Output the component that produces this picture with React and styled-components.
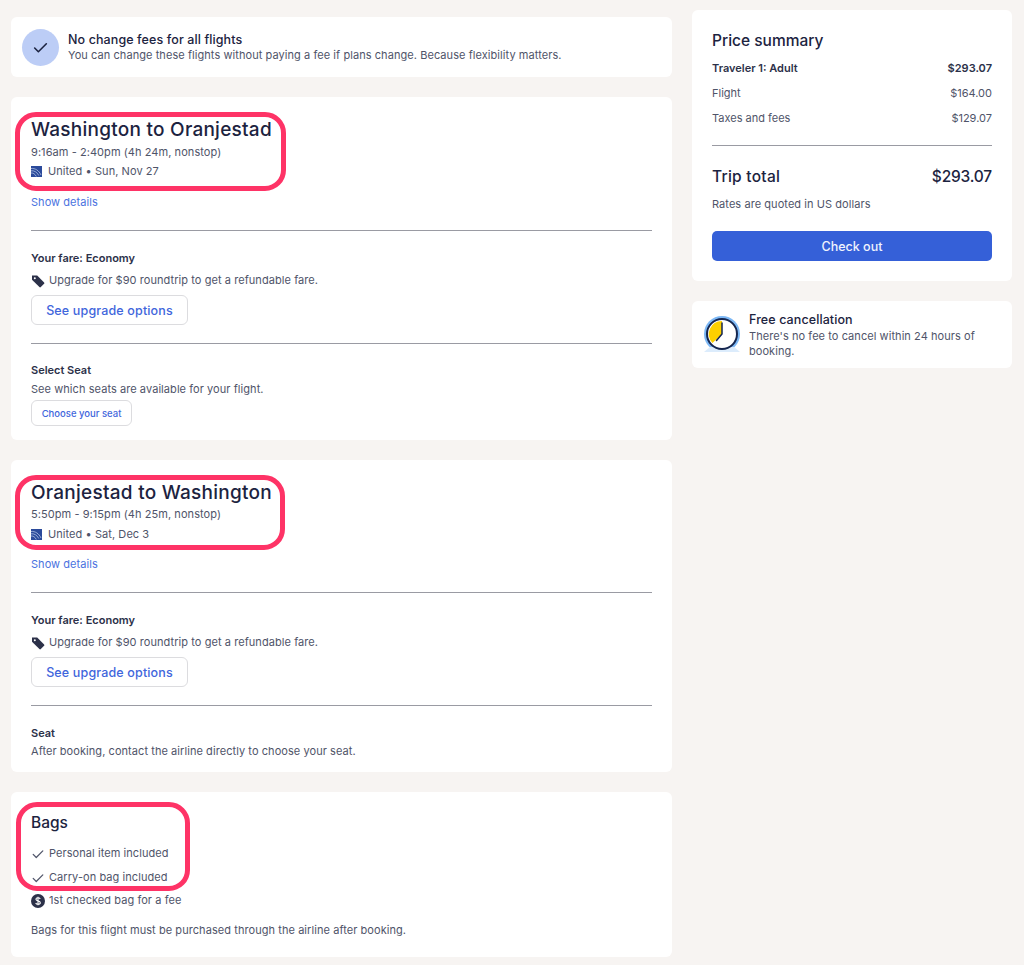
import React from "react";
import styled, { createGlobalStyle } from "styled-components";

const Global = createGlobalStyle`
  html, body { margin: 0; padding: 0; background: #f7f4f2; }
  body { font-family: "Inter", "Lato", "Liberation Sans", sans-serif; color: #4a4f66; font-size: 11.5px; -webkit-font-smoothing: antialiased; }
`;
const Page = styled.div`
  width: 1024px; height: 965px; overflow: hidden; box-sizing: border-box;
  padding: 10px 12px 0 11px; display: grid; grid-template-columns: 661px 320px; column-gap: 20px; align-items: start;
`;
const Column = styled.div`
  display: flex; flex-direction: column; gap: 20px; padding-top: ${p => p.$top || 0}px;
`;
const Card = styled.section`
  background: #fff; border-radius: 6px; box-sizing: border-box; padding: ${p => p.$pad || "0 20px"}; height: ${p => p.$h}px;
`;
const Notice = styled(Card)`
  display: flex; align-items: center; gap: 9px; padding: 0 11px;
`;
const CheckCircle = styled.div`
  width: 37px; height: 37px; border-radius: 50%; background: #bccdf6; display: flex; align-items: center; justify-content: center; flex: none; color: #1c2340;
`;
const TextBlock = styled.div`
  padding-top: ${p => p.$pad}px;
`;
const NoticeTitle = styled.div`
  font-size: 12.5px; line-height: 15px; font-weight: 500; color: #1c2340; letter-spacing: .1px;
`;
const Body = styled.div`
  font-size: 11px; line-height: 15px; letter-spacing: .065px; color: #4f5469; margin-top: ${p => p.$mt || 0}px; display: ${p => p.$flex ? "flex" : "block"}; align-items: center; gap: ${p => p.$gap || 4}px;
`;
const Mark = styled.div`
  position: relative; display: block; width: max-content;
  &::after {
    content: ""; position: absolute; left: ${p => p.$l}px; right: ${p => p.$r}px; top: ${p => p.$t}px; bottom: ${p => p.$b}px;
    border: 5px solid #fe3366; border-radius: 21px; pointer-events: none;
  }
`;
const RouteTitle = styled.h2`
  margin: 0; font-size: 19px; line-height: 24px; font-weight: 500; color: #1c2340; letter-spacing: .25px;
`;
const Link = styled.a`
  display: block; font-size: 11px; line-height: 14px; color: #4a72e0; letter-spacing: .05px; margin-top: ${p => p.$mt}px;
`;
const Rule = styled.hr`
  margin: ${p => p.$m || "20px 0"}; border: 0; border-top: 1px solid #9a9ba3;
`;
const Label = styled.div`
  font-size: 11px; line-height: 15px; font-weight: 600; color: #2c3149;
`;
const OutlineButton = styled.button`
  display: flex; align-items: center; justify-content: center; box-sizing: border-box; background: #fff; border: 1px solid #dcdcdf; border-radius: 6px; color: #3f66dc; font-family: inherit; font-weight: 500;
  width: ${p => p.$small ? 101 : 157}px; height: ${p => p.$small ? 26 : 30}px; font-size: ${p => p.$small ? 9.5 : 12.5}px; letter-spacing: ${p => p.$small ? 0 : ".15px"}; margin-top: ${p => p.$mt}px; padding: 0;
`;
const Bags = styled.h2`
  margin: 0; font-size: 15.5px; line-height: 20px; font-weight: 500; color: #1c2340;
`;
const Summary = styled.div`
  display: flex; justify-content: space-between; align-items: center; font-size: ${p => p.$big ? 15.5 : 11}px; line-height: ${p => p.$big ? 20 : 15}px; font-weight: ${p => p.$big ? 500 : p.$bold ? 600 : 400}; color: ${p => p.$big ? "#1c2340" : p.$bold ? "#2c3149" : "#4f5469"}; letter-spacing: ${p => p.$big ? ".25px" : "0"}; margin-top: ${p => p.$mt}px;
`;
const TotalAmount = styled.span`
  letter-spacing: -.2px;
`;
const SummaryTitle = styled.h3`
  margin: 0; font-size: 15.5px; line-height: 20px; font-weight: 500; color: #1c2340;
`;
const PrimaryButton = styled.button`
  display: block; width: 100%; height: 30px; border: 0; border-radius: 5px; background: #3560d8; color: #f0f3fd; font-family: inherit; font-size: 12.5px; font-weight: 500; margin-top: 19px;
`;
const Cancel = styled(Card)`
  display: flex; align-items: center; gap: 8px; padding: 0 12px 0 11px;
`;

const Check = ({ size = 16, w = 1.4 }) => (
  <svg width={size} height={size} viewBox="0 0 16 16" fill="none" stroke="currentColor" strokeWidth={w} strokeLinecap="round" strokeLinejoin="round" style={{flex:"none"}}>
    <path d="M2.5 8.5 6 12 13.5 4.5" />
  </svg>
);
const Globe = () => (
  <svg width="11" height="11" viewBox="0 0 11 11" style={{flex:"none"}}>
    <rect width="11" height="11" fill="#2b4a9b" />
    <g fill="none" stroke="#c6d2ee" strokeWidth=".7">
      <path d="M0 2.5C4 2 8 4.5 10 9" /><path d="M0 4.8C3 4.4 6 6 7.8 9.5" /><path d="M0 7C2 6.8 4 7.8 5.3 10.5" />
    </g>
  </svg>
);
const Tag = () => (
  <svg width="14" height="14" viewBox="0 0 14 14" style={{flex:"none"}}>
    <path d="M1 1.5h5.2l6.9 6.9a1 1 0 0 1 0 1.4l-3.3 3.3a1 1 0 0 1-1.4 0L1 5.7z" fill="#2c3149" />
    <circle cx="3.8" cy="4.2" r="1" fill="#fff" />
  </svg>
);
const Dollar = () => (
  <svg width="14" height="14" viewBox="0 0 14 14" style={{flex:"none"}}>
    <circle cx="7" cy="7" r="7" fill="#2c3149" />
    <path d="M9.2 4.9C8.8 4.1 8 3.8 7 3.8 5.8 3.8 4.9 4.4 4.9 5.3 4.9 7.4 9.3 6.4 9.3 8.7 9.3 9.6 8.3 10.2 7 10.2 5.9 10.2 5 9.8 4.7 9M7 2.8v8.4" fill="none" stroke="#fff" strokeWidth="1.1" />
  </svg>
);
const Clock = () => (
  <svg width="38" height="38" viewBox="0 0 38 38" style={{flex:"none"}}>
    <circle cx="19" cy="18" r="18" fill="#7db8f5" />
    <path d="M1 36h36l-6-5H7z" fill="#dcecfc" />
    <circle cx="19" cy="18" r="15" fill="#fff" stroke="#15264f" strokeWidth="2" />
    <path d="M19 18V5A13 13 0 0 0 9.5 27z" fill="#fdd000" />
    <path d="M19 18V7M19 18 13.5 24.5" stroke="#15264f" strokeWidth="1.5" strokeLinecap="round" fill="none" />
  </svg>
);

const Flight = ({ title, times, date, r, b, linkGap, timesGap, unitedGap, children, h }) => (
  <Card $h={h} $pad="21px 20px 0">
    <Mark $l={-16} $r={r} $t={-6} $b={b}>
      <RouteTitle>{title}</RouteTitle>
      <Body $mt={timesGap}>{times}</Body>
      <Body $mt={unitedGap} $flex $gap={6}><Globe />United • {date}</Body>
    </Mark>
    <Link $mt={linkGap}>Show details</Link>
    {children}
  </Card>
);

const Fare = ({ after }) => (
  <>
    <Rule $m="21px 0 20px" />
    <Label>Your fare: Economy</Label>
    <Body $mt={7} $flex><Tag />Upgrade for $90 roundtrip to get a refundable fare.</Body>
    <OutlineButton $mt={7}>See upgrade options</OutlineButton>
    <Rule $m={`18px 0 ${after}px`} />
  </>
);

export default function App() {
  return (
    <Page>
      <Global />
      <Column $top={7}>
        <Notice $h={60}>
          <CheckCircle><Check size={17} w={1.5} /></CheckCircle>
          <TextBlock $pad={1}>
            <NoticeTitle>No change fees for all flights</NoticeTitle>
            <Body $mt={1}>You can change these flights without paying a fee if plans change. Because flexibility matters.</Body>
          </TextBlock>
        </Notice>
        <Flight h={343} title="Washington to Oranjestad" times="9:16am - 2:40pm (4h 24m, nonstop)" date="Sun, Nov 27" r={-14} b={-12} timesGap={3} unitedGap={4} linkGap={16}>
          <Fare after={19} />
          <Label>Select Seat</Label>
          <Body $mt={4}>See which seats are available for your flight.</Body>
          <OutlineButton $small $mt={3}>Choose your seat</OutlineButton>
        </Flight>
        <Flight h={312} title="Oranjestad to Washington" times="5:50pm - 9:15pm (4h 25m, nonstop)" date="Sat, Dec 3" r={-13} b={-8} timesGap={2} unitedGap={5} linkGap={15}>
          <Fare after={20} />
          <Label>Seat</Label>
          <Body $mt={3}>After booking, contact the airline directly to choose your seat.</Body>
        </Flight>
        <Card $h={165} $pad="21px 20px 0">
          <Mark $l={-15} $r={-21} $t={-11} $b={-6}>
            <Bags>Bags</Bags>
            <Body $mt={13} $flex $gap={4}><Check size={14} />Personal item included</Body>
            <Body $mt={9} $flex $gap={4}><Check size={14} />Carry-on bag included</Body>
          </Mark>
          <Body $mt={8} $flex $gap={4}><Dollar />1st checked bag for a fee</Body>
          <Body $mt={15}>Bags for this flight must be purchased through the airline after booking.</Body>
        </Card>
      </Column>
      <Column>
        <Card $h={271} $pad="21px 20px 0">
          <SummaryTitle>Price summary</SummaryTitle>
          <Summary $bold $mt={10}><span>Traveler 1: Adult</span><span>$293.07</span></Summary>
          <Summary $mt={10}><span>Flight</span><span>$164.00</span></Summary>
          <Summary $mt={10}><span>Taxes and fees</span><span>$129.07</span></Summary>
          <Rule $m="19px 0 21px" />
          <Summary $big $bold><span>Trip total</span><TotalAmount>$293.07</TotalAmount></Summary>
          <Body $mt={10}>Rates are quoted in US dollars</Body>
          <PrimaryButton>Check out</PrimaryButton>
        </Card>
        <Cancel $h={67}>
          <Clock />
          <TextBlock $pad={2}>
            <NoticeTitle>Free cancellation</NoticeTitle>
            <Body $mt={2}>There's no fee to cancel within 24 hours of booking.</Body>
          </TextBlock>
        </Cancel>
      </Column>
    </Page>
  );
}
